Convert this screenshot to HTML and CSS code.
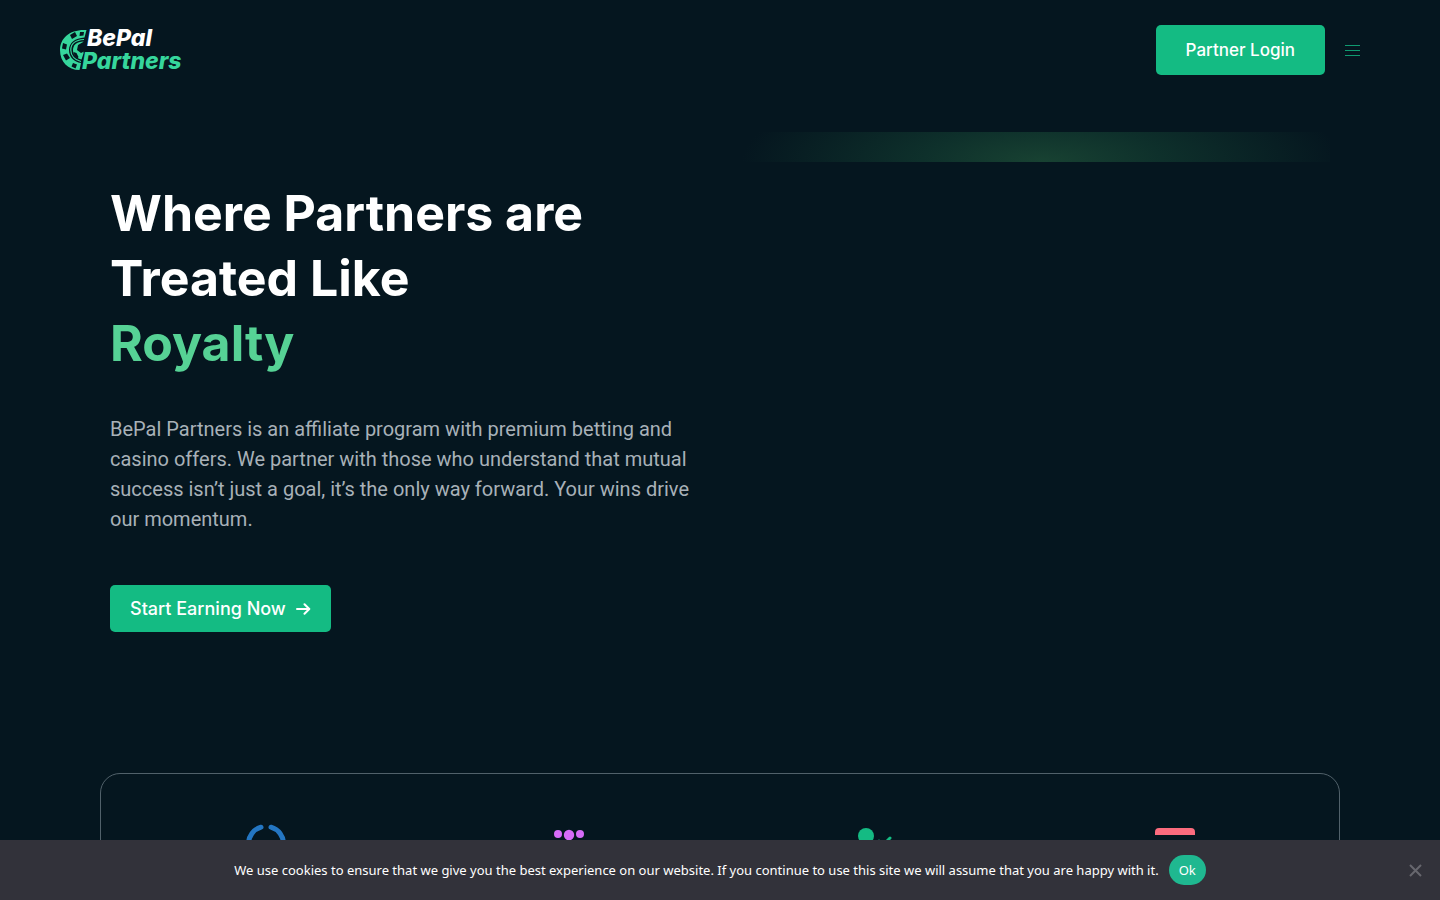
FILE: index.html
```html
<!DOCTYPE html>
<html lang="en">
  <head>
    <meta charset="UTF-8" />
    <meta name="viewport" content="width=device-width, initial-scale=1.0" />
    <title>BePal Partners</title>
    <link rel="stylesheet" href="styles.css" />
  </head>
  <body>
    <header class="site-header">
      <a class="logo" href="#" aria-label="BePal Partners">
        <svg class="logo-chip" width="28" height="42" viewBox="0 0 28 42" aria-hidden="true">
          <path fill="#36d69c" d="M26.500 1C10 0 0 9 0 21c0 12 8 20 19.500 20l1.500-7C14 33 9 28 9 21c0-7 6-12 15.500-12.500z" />
          <g fill="#05161f">
            <path d="M10 6l5-3 2 4-5 3z" />
            <path d="M3 14l4 1.500-1 5-4-1z" />
            <path d="M3 26l4-1.500 3 4.500-4 2.500z" />
            <path d="M13 34l4 1.500-1.500 4-4-2z" />
            <path d="M20 3h4l-.500 3.500-4 .5z" />
          </g>
          <path fill="none" stroke="#36d69c" stroke-width="1.200" d="M24 10.500C15.500 11 10.800 15 10.800 21c0 5.500 4 10 10.200 11.500" />
          <path fill="#36d69c" d="M23.500 12.500c-7 .5-10.500 3.500-10.500 8.500 0 4.500 3.500 8.500 8.500 9.500l2-6z" />
          <path fill="#05161f" d="M18 16l6-3.500v10l-3 1.500-4-3zM13.500 23l3 1 2 4-1 1.500C15 28 13.800 25.500 13.500 23z" />
        </svg>
        <span class="logo-text">
          <span class="logo-name">BePal</span>
          <span class="logo-accent">Partners</span>
        </span>
      </a>
      <div class="header-actions">
        <a class="btn btn-login" href="#">Partner Login</a>
        <button class="menu-toggle" type="button" aria-label="Menu">
          <svg width="15" height="11" viewBox="0 0 15 11" stroke="#0f9a70" stroke-width="1">
            <path d="M0 .5h15M0 5.500h15M0 10.500h15" />
          </svg>
        </button>
      </div>
    </header>

    <main class="container">
      <section class="hero">
        <div class="hero-content">
          <h1>Where Partners are Treated Like <span>Royalty</span></h1>
          <p>
            BePal Partners is an affiliate program with premium betting and
            casino offers. We partner with those who understand that mutual
            success isn’t just a goal, it’s the only way forward. Your wins
            drive our momentum.
          </p>
          <a class="btn btn-start" href="#">
            Start Earning Now
            <svg width="15" height="12" viewBox="0 0 15 12" fill="none" stroke="#fff" stroke-width="2" stroke-linecap="round" stroke-linejoin="round">
              <path d="M1 6h12M8.500 1.200l4.800 4.800-4.800 4.800" />
            </svg>
          </a>
        </div>
        <div class="hero-media">
          <div class="glow"></div>
        </div>
      </section>

      <section class="features">
        <svg width="40" height="40" viewBox="0 0 40 40" fill="none" stroke="#2476c2" stroke-width="5" stroke-linecap="round">
          <path d="M15 3.200A17.500 17.500 0 0 0 15 36.800M25 3.200A17.500 17.500 0 0 1 25 36.800" />
        </svg>
        <svg width="40" height="40" viewBox="0 0 40 40" fill="#d66bf8">
          <circle cx="9" cy="10" r="4" />
          <circle cx="20" cy="11" r="5.200" />
          <circle cx="31" cy="10" r="4" />
          <path d="M9 34c0-16 22-16 22 0z" />
        </svg>
        <svg width="40" height="40" viewBox="0 0 40 40" fill="#14bb83">
          <circle cx="14" cy="12" r="8" />
          <path d="M0 36c0-18 28-18 28 0z" />
          <path d="M27 17l4 4 7-7" fill="none" stroke="#14bb83" stroke-width="3" stroke-linecap="round" />
        </svg>
        <svg width="40" height="40" viewBox="0 0 40 40" fill="#fb6b7d">
          <path d="M0 11V8q0-4 4-4h32q4 0 4 4v3zM0 17h40v15q0 4-4 4H4q-4 0-4-4z" />
        </svg>
      </section>
    </main>

    <div class="cookie-bar" role="dialog" aria-label="Cookie notice">
      <span>We use cookies to ensure that we give you the best experience on our website. If you continue to use this site we will assume that you are happy with it.</span>
      <button class="cookie-ok" type="button">Ok</button>
      <button class="cookie-close" type="button" aria-label="Close">
        <svg width="13" height="13" viewBox="0 0 13 13" stroke="#67676e" stroke-width="2">
          <path d="M1 1l11 11M12 1L1 12" />
        </svg>
      </button>
    </div>
  </body>
</html>
```
FILE: styles.css
```css
* {
  box-sizing: border-box;
}
body {
  margin: 0;
  background: #05161f;
  color: #fff;
  font-family: Inter, "Liberation Sans", sans-serif;
}
a {
  color: inherit;
  text-decoration: none;
}
button {
  border: 0;
  padding: 0;
  background: none;
  font: inherit;
  cursor: pointer;
}
svg {
  display: block;
}

/* Header */
.site-header {
  display: flex;
  align-items: center;
  justify-content: space-between;
  height: 100px;
  padding: 0 80px 0 60px;
}
.logo {
  display: flex;
  align-items: center;
}
.logo-chip {
  margin-right: -6px;
}
.logo-text {
  display: grid;
  font-size: 23px;
  font-weight: 800;
  font-style: italic;
  line-height: 23px;
}
.logo-name {
  padding-left: 5px;
}
.logo-accent {
  color: #36d69c;
}
.header-actions {
  display: flex;
  align-items: center;
  gap: 20px;
}
.btn {
  display: inline-flex;
  align-items: center;
  background: #14bb83;
  border-radius: 5px;
  font-weight: 500;
}
.btn-login {
  height: 50px;
  padding: 0 30px;
  font-size: 17px;
}

/* Hero */
.container {
  max-width: 1240px;
  margin: 0 auto;
}
.hero {
  display: grid;
  grid-template-columns: 1fr 1fr;
  padding: 32px 0 141px;
}
.hero-content {
  padding: 49px 10px 0;
}
.hero h1 {
  max-width: 520px;
  margin: 0 0 38px;
  font-size: 50px;
  font-weight: 700;
  line-height: 65px;
}
.hero h1 span {
  display: block;
  color: #56d295;
}
.hero p {
  margin: 0 0 51px;
  color: #a8b1b8;
  font-family: Roboto, sans-serif;
  font-size: 20px;
  line-height: 30px;
}
.btn-start {
  gap: 10px;
  height: 47px;
  padding: 0 20px;
  font-size: 18px;
}
.hero-media {
  padding: 0 10px;
}
.glow {
  height: 30px;
  background: radial-gradient(ellipse 300px 90px at 52% 100%, #184232, #0e302b 40%, transparent);
}

/* Features */
.features {
  display: grid;
  grid-template-columns: repeat(4, 1fr);
  justify-items: center;
  padding: 50px 13px;
  border: 1px solid #51616a;
  border-radius: 20px;
}

/* Cookie notice */
.cookie-bar {
  position: fixed;
  right: 0;
  bottom: 0;
  left: 0;
  display: flex;
  align-items: center;
  justify-content: center;
  gap: 10px;
  height: 60px;
  background: #32323a;
  font-family: "Noto Sans", sans-serif;
  font-size: 13px;
}
.cookie-ok {
  height: 30px;
  padding: 0 10px;
  border-radius: 15px;
  background: #1fb890;
  color: #fff;
}
.cookie-close {
  position: absolute;
  right: 18px;
}
```
